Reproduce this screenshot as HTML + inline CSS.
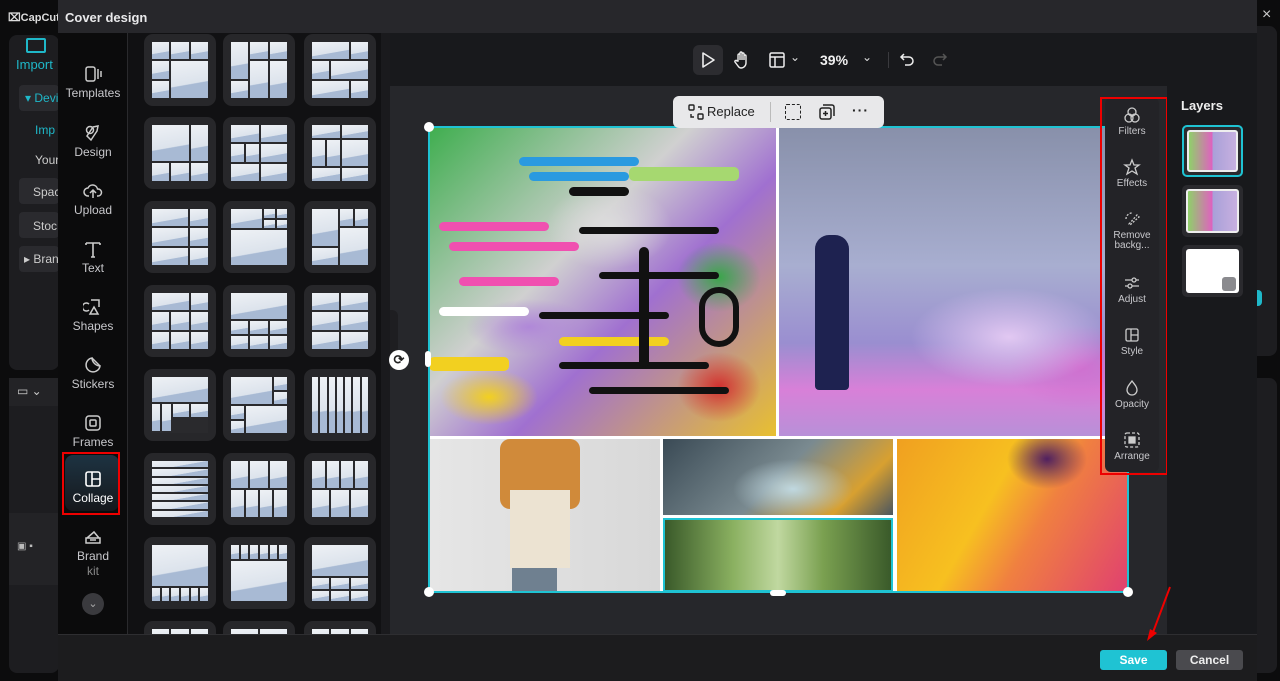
<!DOCTYPE html>
<html><head><meta charset="utf-8"><style>
*{box-sizing:border-box;margin:0;padding:0}
body{width:1280px;height:681px;overflow:hidden;background:#0c0c0d;font-family:"Liberation Sans",sans-serif;color:#ddd;position:relative}
.a{position:absolute;white-space:nowrap}
.nav{left:58px;top:33px;width:70px;height:601px;background:#0b0b0c}
.ni{position:absolute;left:0;width:70px;text-align:center;font-size:12px;color:#c8c8cc}
.ni svg{display:block;margin:0 auto 2px}
.tp{left:128px;top:33px;width:262px;height:601px;background:#111113;overflow:hidden}
.tile{position:absolute;width:72px;height:72px;background:#27272a;border-radius:9px}
.g{position:absolute;left:8px;top:8px;width:56px;height:56px;display:grid;gap:2px;background:#2a2a2d}
.g i{display:block;background:linear-gradient(170deg,#eef1f5 0%,#dce3ec 60%,#a8bad4 62%,#a8bad4 100%)}
.tb{left:390px;top:33px;width:867px;height:53px;background:#18191c}
.cv{left:390px;top:86px;width:777px;height:548px;background:#26272b}
.lay{left:1167px;top:66px;width:90px;height:568px;background:#18191c}
.ph{position:absolute;overflow:hidden}
.st{position:absolute;left:1105px;top:98px;width:54px;height:374px;background:#232327;border-radius:6px}
.si{position:absolute;left:0;width:54px;text-align:center;font-size:10px;color:#c8c8cc;line-height:10px}
.si svg{display:block;margin:0 auto 3px}
.sk{position:absolute;height:9px;border-radius:5px}
</style></head><body>
<!-- background app -->
<div class="a" style="left:8px;top:11px;color:#ddd;font-size:11px;font-weight:bold;width:50px;overflow:hidden">⌧CapCut</div>
<div class="a" style="left:9px;top:35px;width:50px;height:335px;background:#1d1d20;border-radius:8px"></div>
<div class="a" style="left:26px;top:38px;width:20px;height:15px;border:2px solid #1fb8c9;border-radius:2px"></div>
<div class="a" style="left:16px;top:57px;font-size:13px;color:#1fb8c9">Import</div>
<div class="a" style="left:19px;top:85px;width:40px;height:26px;background:#2a2a2e;border-radius:4px;font-size:12px;color:#1fb8c9;padding:6px 0 0 6px;overflow:hidden">▾ Devi</div>
<div class="a" style="left:35px;top:123px;font-size:12px;color:#1fb8c9">Imp</div>
<div class="a" style="left:35px;top:153px;font-size:12px;color:#ccc">Your</div>
<div class="a" style="left:19px;top:178px;width:40px;height:26px;background:#2a2a2e;border-radius:4px;font-size:12px;color:#ccc;padding:7px 0 0 14px;overflow:hidden">Spac</div>
<div class="a" style="left:19px;top:212px;width:40px;height:26px;background:#2a2a2e;border-radius:4px;font-size:12px;color:#ccc;padding:7px 0 0 14px;overflow:hidden">Stoc</div>
<div class="a" style="left:19px;top:246px;width:40px;height:26px;background:#2a2a2e;border-radius:4px;font-size:12px;color:#ccc;padding:6px 0 0 5px;overflow:hidden">▸ Bran</div>
<div class="a" style="left:9px;top:378px;width:50px;height:295px;background:#1d1d20;border-radius:8px"></div>
<div class="a" style="left:9px;top:378px;width:50px;height:28px;background:#232326;font-size:12px;color:#ccc;padding:6px 0 0 8px">▭ ⌄</div>
<div class="a" style="left:9px;top:513px;width:50px;height:72px;background:#232326;font-size:10px;color:#bbb;padding:28px 0 0 8px">▣ ▪</div>
<div class="a" style="left:1257px;top:0;width:23px;height:681px;background:#0c0c0d"></div>
<div class="a" style="left:1257px;top:26px;width:20px;height:330px;background:#1d1d20;border-radius:0 8px 8px 0"></div>
<div class="a" style="left:1257px;top:290px;width:5px;height:16px;background:#1fb8c9;border-radius:0 4px 4px 0"></div>
<div class="a" style="left:1257px;top:378px;width:20px;height:295px;background:#1d1d20;border-radius:0 8px 8px 0"></div>
<div class="a" style="left:1262px;top:6px;font-size:16px;color:#ccc">×</div>

<!-- modal -->
<div class="a" style="left:58px;top:0;width:1199px;height:33px;background:#27272b;font-size:13px;font-weight:bold;color:#e8e8ea;padding:10px 0 0 7px">Cover design</div>
<div class="a nav">
 <div class="ni" style="top:31px"><svg width="20" height="20" viewBox="0 0 20 20" fill="none" stroke="#ccc" stroke-width="1.5"><rect x="3" y="3" width="9" height="14" rx="2"/><path d="M15 5v10M18 7v6"/></svg>Templates</div>
 <div class="ni" style="top:90px"><svg width="20" height="20" viewBox="0 0 20 20" fill="none" stroke="#ccc" stroke-width="1.5"><circle cx="7" cy="7" r="3.5"/><path d="M10 4l5-1-1 5-6 9-4-4z"/></svg>Design</div>
 <div class="ni" style="top:148px"><svg width="20" height="20" viewBox="0 0 20 20" fill="none" stroke="#ccc" stroke-width="1.5"><path d="M6 15H5a4 4 0 010-8 5 5 0 019.5 1H15a3.5 3.5 0 010 7h-1M10 17V10M7 12l3-3 3 3"/></svg>Upload</div>
 <div class="ni" style="top:206px"><svg width="20" height="20" viewBox="0 0 20 20" fill="none" stroke="#ccc" stroke-width="1.6"><path d="M3 4h14M10 4v14M3 4v2M17 4v2M8 18h4"/></svg>Text</div>
 <div class="ni" style="top:264px"><svg width="20" height="20" viewBox="0 0 20 20" fill="none" stroke="#ccc" stroke-width="1.5"><path d="M8 3h8v7M6 7a4 4 0 100 6M11 10l-4 7h8z"/></svg>Shapes</div>
 <div class="ni" style="top:322px"><svg width="20" height="20" viewBox="0 0 20 20" fill="none" stroke="#ccc" stroke-width="1.5"><path d="M17 11a7 7 0 11-8-8c0 4 4 8 8 8zM9 3l8 8"/></svg>Stickers</div>
 <div class="ni" style="top:380px"><svg width="20" height="20" viewBox="0 0 20 20" fill="none" stroke="#ccc" stroke-width="1.5"><rect x="3" y="3" width="14" height="14" rx="3"/><rect x="7" y="7" width="6" height="6" rx="1"/></svg>Frames</div>
 <div class="a" style="left:7px;top:422px;width:54px;height:56px;background:linear-gradient(#1d3342,#16181c);border-radius:8px"></div>
 <div class="a" style="left:4px;top:419px;width:58px;height:63px;border:2px solid #e00"></div>
 <div class="ni" style="top:436px;color:#fff"><svg width="20" height="20" viewBox="0 0 20 20" fill="none" stroke="#fff" stroke-width="1.6"><rect x="3" y="3" width="14" height="14" rx="2"/><path d="M9 3v14M9 10h8"/></svg>Collage</div>
 <div class="ni" style="top:494px;line-height:15px"><svg width="20" height="20" viewBox="0 0 20 20" fill="none" stroke="#ccc" stroke-width="1.5"><path d="M3 11h14v5H3zM4 11l7-6 5 6M7 13h6"/></svg>Brand<br><span style="color:#888">kit</span></div>
 <div class="a" style="left:24px;top:560px;width:22px;height:22px;border-radius:50%;background:#3a3a3e;color:#aaa;font-size:11px;text-align:center;line-height:22px">⌄</div>
</div>
<div class="a" style="left:127px;top:33px;width:1px;height:601px;background:#2a2a2d"></div>
<div class="a tp">
 <div class="tile" style="left:16px;top:1px"><div class="g" style="grid-template:1fr 1fr 1fr/1fr 1fr 1fr"><i></i><i></i><i></i><i></i><i style="grid-column:2/4;grid-row:2/4"></i><i></i></div></div>
 <div class="tile" style="left:95px;top:1px"><div class="g" style="grid-template:1fr 1fr 1fr/1fr 1fr 1fr"><i></i><i style="grid-row:1/3"></i><i></i><i style="grid-row:2/4"></i><i style="grid-row:2/4"></i><i></i></div></div>
 <div class="tile" style="left:176px;top:1px"><div class="g" style="grid-template:1fr 1fr 1fr/1fr 1fr 1fr"><i style="grid-column:1/3"></i><i></i><i></i><i style="grid-column:2/4"></i><i style="grid-column:1/3"></i><i></i></div></div>
 <div class="tile" style="left:16px;top:84px"><div class="g" style="grid-template:2fr 1fr/1fr 1fr 1fr"><i style="grid-column:1/3"></i><i></i><i></i><i></i><i></i></div></div>
 <div class="tile" style="left:95px;top:84px"><div class="g" style="grid-template:1fr 1fr 1fr/1fr 1fr 2fr"><i style="grid-column:1/3"></i><i></i><i></i><i></i><i></i><i style="grid-column:1/3"></i><i></i></div></div>
 <div class="tile" style="left:176px;top:84px"><div class="g" style="grid-template:1fr 2fr 1fr/1fr 1fr 2fr"><i style="grid-column:1/3"></i><i></i><i></i><i></i><i></i><i style="grid-column:1/3"></i><i></i></div></div>
 <div class="tile" style="left:16px;top:168px"><div class="g" style="grid-template:1fr 1fr 1fr/2fr 1fr"><i></i><i></i><i></i><i></i><i></i><i></i></div></div>
 <div class="tile" style="left:95px;top:168px"><div class="g" style="grid-template:1fr 1fr 4fr/3fr 1fr 1fr"><i style="grid-row:1/3"></i><i></i><i></i><i></i><i></i><i style="grid-column:1/4"></i></div></div>
 <div class="tile" style="left:176px;top:168px"><div class="g" style="grid-template:1fr 1fr 1fr/2fr 1fr 1fr"><i style="grid-row:1/3"></i><i></i><i></i><i style="grid-column:2/4;grid-row:2/4"></i><i></i></div></div>
 <div class="tile" style="left:16px;top:252px"><div class="g" style="grid-template:1fr 1fr 1fr/1fr 1fr 1fr"><i style="grid-column:1/3"></i><i></i><i></i><i></i><i></i><i></i><i></i><i></i></div></div>
 <div class="tile" style="left:95px;top:252px"><div class="g" style="grid-template:2fr 1fr 1fr/1fr 1fr 1fr"><i style="grid-column:1/4"></i><i></i><i></i><i></i><i></i><i></i><i></i></div></div>
 <div class="tile" style="left:176px;top:252px"><div class="g" style="grid-template:1fr 1fr 1fr/1fr 1fr"><i></i><i></i><i></i><i></i><i></i><i></i></div></div>
 <div class="tile" style="left:16px;top:336px"><div class="g" style="grid-template:2fr 1fr 1fr/1fr 1fr 2fr 2fr"><i style="grid-column:1/5"></i><i></i><i></i><i style="grid-row:2/4"></i><i style="grid-row:2/4"></i><i style="grid-column:1/3"></i><i style="grid-column:3/5"></i></div></div>
 <div class="tile" style="left:95px;top:336px"><div class="g" style="grid-template:1fr 1fr 1fr 1fr/1fr 2fr 1fr"><i style="grid-column:1/3;grid-row:1/3"></i><i></i><i></i><i></i><i style="grid-column:2/4;grid-row:3/5"></i><i></i></div></div>
 <div class="tile" style="left:176px;top:336px"><div class="g" style="grid-template:1fr/repeat(7,1fr)"><i></i><i></i><i></i><i></i><i></i><i></i><i></i></div></div>
 <div class="tile" style="left:16px;top:420px"><div class="g" style="grid-template:repeat(7,1fr)/1fr"><i></i><i></i><i></i><i></i><i></i><i></i><i></i></div></div>
 <div class="tile" style="left:95px;top:420px"><div class="g" style="grid-template:1fr 1fr/repeat(12,1fr)"><i style="grid-column:span 4"></i><i style="grid-column:span 4"></i><i style="grid-column:span 4"></i><i style="grid-column:span 3"></i><i style="grid-column:span 3"></i><i style="grid-column:span 3"></i><i style="grid-column:span 3"></i></div></div>
 <div class="tile" style="left:176px;top:420px"><div class="g" style="grid-template:1fr 1fr/repeat(12,1fr)"><i style="grid-column:span 3"></i><i style="grid-column:span 3"></i><i style="grid-column:span 3"></i><i style="grid-column:span 3"></i><i style="grid-column:span 4"></i><i style="grid-column:span 4"></i><i style="grid-column:span 4"></i></div></div>
 <div class="tile" style="left:16px;top:504px"><div class="g" style="grid-template:3fr 1fr/repeat(6,1fr)"><i style="grid-column:1/7"></i><i></i><i></i><i></i><i></i><i></i><i></i></div></div>
 <div class="tile" style="left:95px;top:504px"><div class="g" style="grid-template:1fr 3fr/repeat(6,1fr)"><i></i><i></i><i></i><i></i><i></i><i></i><i style="grid-column:1/7"></i></div></div>
 <div class="tile" style="left:176px;top:504px"><div class="g" style="grid-template:3fr 1fr 1fr/1fr 1fr 1fr"><i style="grid-column:1/4"></i><i></i><i></i><i></i><i></i><i></i><i></i></div></div>
 <div class="tile" style="left:16px;top:588px"><div class="g" style="grid-template:1fr 1fr/1fr 1fr 1fr"><i></i><i></i><i></i><i></i><i></i><i></i></div></div>
 <div class="tile" style="left:95px;top:588px"><div class="g" style="grid-template:1fr 1fr/1fr 1fr"><i></i><i></i><i></i><i></i></div></div>
 <div class="tile" style="left:176px;top:588px"><div class="g" style="grid-template:1fr 1fr/1fr 1fr 1fr"><i></i><i></i><i></i><i></i><i></i><i></i></div></div>
</div>
<div class="a" style="left:381px;top:33px;width:9px;height:601px;background:#1a1a1d"></div>

<!-- toolbar -->
<div class="a tb"></div>
<div class="a" style="left:693px;top:45px;width:30px;height:30px;background:#2c2c30;border-radius:6px"></div>
<svg class="a" style="left:699px;top:51px" width="18" height="18" viewBox="0 0 18 18" fill="none" stroke="#eee" stroke-width="1.6"><path d="M4 2l11 7-11 7z" stroke-linejoin="round"/></svg>
<svg class="a" style="left:732px;top:50px" width="20" height="20" viewBox="0 0 20 20" fill="none" stroke="#eee" stroke-width="1.4"><path d="M6 11V5a1 1 0 012 0v5V3a1 1 0 012 0v7V4a1 1 0 012 0v6V6a1 1 0 012 0v7a5 5 0 01-5 5H9a4 4 0 01-3-2l-3-4a1 1 0 012-1z"/></svg>
<svg class="a" style="left:768px;top:51px" width="18" height="18" viewBox="0 0 18 18" fill="none" stroke="#eee" stroke-width="1.5"><rect x="2" y="2" width="14" height="14" rx="1.5"/><path d="M2 6h14M7 6v10"/></svg>
<div class="a" style="left:790px;top:50px;font-size:12px;color:#ddd">⌄</div>
<div class="a" style="left:820px;top:52px;font-size:14px;font-weight:bold;color:#f0f0f0">39%</div>
<div class="a" style="left:862px;top:50px;font-size:12px;color:#ddd">⌄</div>
<div class="a" style="left:888px;top:52px;width:1px;height:16px;background:#3a3a3e"></div>
<svg class="a" style="left:898px;top:51px" width="18" height="18" viewBox="0 0 18 18" fill="none" stroke="#eee" stroke-width="1.5"><path d="M6 3L3 6l3 3M3 6h8a4 4 0 010 8H7"/></svg>
<svg class="a" style="left:931px;top:51px" width="18" height="18" viewBox="0 0 18 18" fill="none" stroke="#555" stroke-width="1.5"><path d="M12 3l3 3-3 3M15 6H7a4 4 0 000 8h4"/></svg>

<!-- canvas -->
<div class="a cv"></div>
<div class="a" style="left:390px;top:310px;width:8px;height:44px;background:#1e1e21;border-radius:0 6px 6px 0"></div>
<div class="a" style="left:389px;top:350px;width:20px;height:20px;border-radius:50%;background:#fff;color:#222;font-size:13px;text-align:center;line-height:20px;font-weight:bold">⟳</div>
<div class="a" style="left:429px;top:127px;width:699px;height:465px;background:#fff"></div>
<div class="ph" style="left:429px;top:127px;width:347px;height:309px;background:
radial-gradient(ellipse 90px 60px at 180px 100px,#ddd,transparent 70%),
radial-gradient(ellipse 60px 50px at 290px 150px,#3aa64a,transparent 70%),
radial-gradient(ellipse 90px 40px at 100px 200px,#b088d8,transparent 70%),
radial-gradient(ellipse 70px 40px at 60px 270px,#f2d020,transparent 70%),
radial-gradient(ellipse 60px 50px at 290px 260px,#d23030,transparent 70%),
linear-gradient(135deg,#3fae4f,#d0d0d0 40%,#a070d0 60%,#e8c030)">
 <div class="sk" style="left:90px;top:30px;width:120px;background:#2a9ae0"></div>
 <div class="sk" style="left:100px;top:45px;width:100px;background:#2a9ae0"></div>
 <div class="sk" style="left:140px;top:60px;width:60px;background:#111"></div>
 <div class="sk" style="left:200px;top:40px;width:110px;height:14px;background:#a6d870"></div>
 <div class="sk" style="left:10px;top:95px;width:110px;background:#f050b0"></div>
 <div class="sk" style="left:20px;top:115px;width:130px;background:#f050b0"></div>
 <div class="sk" style="left:150px;top:100px;width:140px;height:7px;background:#111"></div>
 <div class="sk" style="left:170px;top:145px;width:120px;height:7px;background:#111"></div>
 <div class="sk" style="left:30px;top:150px;width:100px;background:#f050b0"></div>
 <div class="sk" style="left:110px;top:185px;width:130px;height:7px;background:#111"></div>
 <div class="sk" style="left:130px;top:210px;width:110px;background:#f2d020"></div>
 <div class="sk" style="left:130px;top:235px;width:150px;height:7px;background:#111"></div>
 <div class="sk" style="left:0;top:230px;width:80px;height:14px;background:#f2d020"></div>
 <div class="sk" style="left:160px;top:260px;width:140px;height:7px;background:#111"></div>
 <div class="sk" style="left:210px;top:120px;width:10px;height:120px;background:#111"></div>
 <div class="sk" style="left:270px;top:160px;width:40px;height:60px;border:6px solid #111;background:transparent;border-radius:20px"></div>
 <div class="sk" style="left:10px;top:180px;width:90px;background:#fff"></div>
</div>
<div class="ph" style="left:779px;top:127px;width:349px;height:309px;background:
radial-gradient(ellipse 140px 70px at 230px 210px,#e2c8f2,transparent 70%),
radial-gradient(ellipse 100px 60px at 300px 240px,#d070d0,transparent 70%),
linear-gradient(180deg,#8890aa 0%,#a8aed0 45%,#9a8ed0 70%,#d880d8 85%,#b890d8 100%)"></div>
<div class="ph" style="left:815px;top:235px;width:34px;height:155px;background:#1e2250;border-radius:14px 14px 4px 4px"></div>
<div class="ph" style="left:429px;top:439px;width:231px;height:153px;background:linear-gradient(90deg,#e6e6e6,#d8d8d8)"></div>
<div class="ph" style="left:500px;top:439px;width:80px;height:70px;background:#d08a3a;border-radius:10px"></div>
<div class="ph" style="left:510px;top:490px;width:60px;height:78px;background:#ece3d2"></div>
<div class="ph" style="left:512px;top:568px;width:45px;height:24px;background:#6f8090"></div>
<div class="ph" style="left:663px;top:439px;width:230px;height:76px;background:radial-gradient(ellipse 60px 30px at 130px 50px,#c0d8e0,transparent),linear-gradient(135deg,#3a4a55,#7a8a90 50%,#d8a030 80%,#4a5560)"></div>
<div class="ph" style="left:663px;top:518px;width:230px;height:74px;background:linear-gradient(90deg,#3a5a2a,#8ab060 30%,#c0d8a0 50%,#7aa050 70%,#3a5a2a);border:2px solid #1fc3d3"></div>
<div class="ph" style="left:897px;top:439px;width:231px;height:153px;background:radial-gradient(ellipse 40px 30px at 150px 20px,#502060,transparent),linear-gradient(120deg,#f0a020,#f7c020 40%,#f08040 60%,#e04070)"></div>
<div class="a" style="left:428px;top:126px;width:701px;height:467px;border:2px solid #1fc3d3"></div>
<div class="a" style="left:424px;top:122px;width:10px;height:10px;border-radius:50%;background:#fff"></div>
<div class="a" style="left:424px;top:587px;width:10px;height:10px;border-radius:50%;background:#fff"></div>
<div class="a" style="left:1123px;top:587px;width:10px;height:10px;border-radius:50%;background:#fff"></div>
<div class="a" style="left:425px;top:351px;width:6px;height:16px;border-radius:3px;background:#fff"></div>
<div class="a" style="left:770px;top:590px;width:16px;height:6px;border-radius:3px;background:#fff"></div>
<!-- floating bar -->
<div class="a" style="left:673px;top:96px;width:211px;height:32px;background:#e8e8ea;border-radius:6px"></div>
<svg class="a" style="left:688px;top:104px" width="16" height="16" viewBox="0 0 16 16" fill="none" stroke="#222" stroke-width="1.4"><rect x="1" y="1" width="5" height="5" rx="1"/><rect x="10" y="10" width="5" height="5" rx="1"/><path d="M10 3h3v3M6 13H3v-3"/></svg>
<div class="a" style="left:707px;top:104px;font-size:13px;color:#222">Replace</div>
<div class="a" style="left:770px;top:102px;width:1px;height:20px;background:#bbb"></div>
<div class="a" style="left:785px;top:104px;width:16px;height:16px;border:1.5px dashed #222;border-radius:2px"></div>
<svg class="a" style="left:818px;top:103px" width="18" height="18" viewBox="0 0 18 18" fill="none" stroke="#222" stroke-width="1.5"><rect x="2" y="5" width="11" height="11" rx="2"/><path d="M5 2h9a2 2 0 012 2v9M7.5 8v5M5 10.5h5"/></svg>
<div class="a" style="left:852px;top:102px;font-size:14px;color:#222;font-weight:bold;letter-spacing:1px">···</div>

<!-- tool strip -->
<div class="st">
 <div class="si" style="top:8px"><svg width="18" height="18" viewBox="0 0 18 18" fill="none" stroke="#ccc" stroke-width="1.3"><circle cx="9" cy="6" r="4"/><circle cx="6" cy="12" r="4"/><circle cx="12" cy="12" r="4"/></svg>Filters</div>
 <div class="si" style="top:60px"><svg width="18" height="18" viewBox="0 0 18 18" fill="none" stroke="#ccc" stroke-width="1.3"><path d="M9 2l2 5h5l-4 3 2 6-5-3-5 3 2-6-4-3h5z"/></svg>Effects</div>
 <div class="si" style="top:112px"><svg width="18" height="18" viewBox="0 0 18 18" fill="none" stroke="#ccc" stroke-width="1.3"><path d="M6 14l8-9 2 2-9 8z M3 9a6 6 0 016-6" stroke-dasharray="2 1.5"/></svg>Remove<br>backg...</div>
 <div class="si" style="top:176px"><svg width="18" height="18" viewBox="0 0 18 18" fill="none" stroke="#ccc" stroke-width="1.3"><path d="M2 6h14M2 12h14"/><circle cx="11" cy="6" r="2" fill="#232327"/><circle cx="7" cy="12" r="2" fill="#232327"/></svg>Adjust</div>
 <div class="si" style="top:228px"><svg width="18" height="18" viewBox="0 0 18 18" fill="none" stroke="#ccc" stroke-width="1.3"><rect x="3" y="3" width="12" height="12" rx="1.5"/><path d="M8 3v12M8 9h7"/></svg>Style</div>
 <div class="si" style="top:281px"><svg width="18" height="18" viewBox="0 0 18 18" fill="none" stroke="#ccc" stroke-width="1.3"><path d="M9 2c3 4 5 6 5 9a5 5 0 01-10 0c0-3 2-5 5-9z"/></svg>Opacity</div>
 <div class="si" style="top:333px"><svg width="18" height="18" viewBox="0 0 18 18" fill="none" stroke="#ccc" stroke-width="1.3"><rect x="2" y="2" width="14" height="14" rx="2" stroke-dasharray="3 2"/><rect x="6" y="6" width="6" height="6" fill="#ccc"/></svg>Arrange</div>
</div>
<div class="a" style="left:1100px;top:97px;width:68px;height:378px;border:2px solid #e00"></div>

<!-- layers -->
<div class="a lay"></div>
<div class="a" style="left:1181px;top:98px;font-size:13px;font-weight:bold;color:#eee">Layers</div>
<div class="a" style="left:1182px;top:125px;width:61px;height:52px;border:2px solid #1fc3d3;border-radius:5px;background:#2a2a2e;padding:3px"><div style="width:100%;height:100%;border-radius:3px;background:linear-gradient(90deg,#8fd06a 0,#e060c0 50%,#a8a0d8 50%,#c8b0e0 100%);border:2px solid #eee"></div></div>
<div class="a" style="left:1182px;top:185px;width:61px;height:52px;border-radius:5px;background:#2a2a2e;padding:4px"><div style="width:100%;height:100%;border-radius:3px;background:linear-gradient(90deg,#8fd06a 0,#e060c0 50%,#a8a0d8 50%,#c8b0e0 100%);border:2px solid #eee"></div></div>
<div class="a" style="left:1182px;top:245px;width:61px;height:52px;border-radius:5px;background:#2a2a2e;padding:4px"><div style="width:100%;height:100%;border-radius:3px;background:#fff"></div></div>
<div class="a" style="left:1222px;top:277px;width:14px;height:14px;border-radius:3px;background:#8a8a8e"></div>

<!-- bottom bar -->
<div class="a" style="left:58px;top:634px;width:1199px;height:47px;background:#1c1c1e;border-top:1px solid #2e2e31"></div>
<div class="a" style="left:1100px;top:650px;width:67px;height:20px;background:#1fc3d3;border-radius:3px;font-size:12px;font-weight:bold;color:#fff;text-align:center;line-height:20px">Save</div>
<div class="a" style="left:1176px;top:650px;width:67px;height:20px;background:#4a4a4e;border-radius:3px;font-size:12px;font-weight:bold;color:#eee;text-align:center;line-height:20px">Cancel</div>
<svg class="a" style="left:1140px;top:585px" width="35" height="60" viewBox="0 0 35 60"><path d="M30 2L12 50" stroke="#e00" stroke-width="2"/><path d="M7 56l3-12 7 4z" fill="#e00"/></svg>
</body></html>
